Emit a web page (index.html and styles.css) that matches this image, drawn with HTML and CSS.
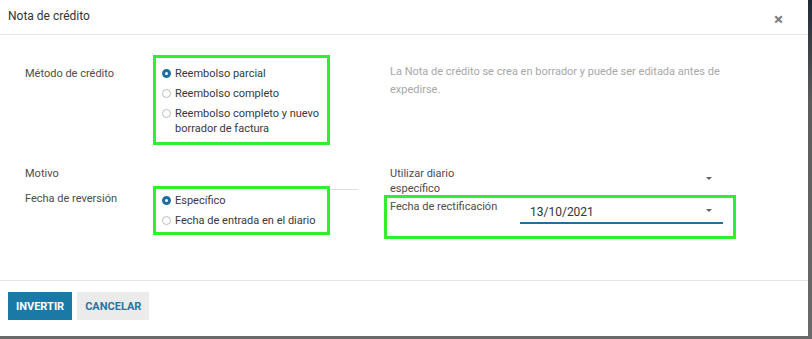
FILE: index.html
```html
<!DOCTYPE html>
<html lang="es">
<head>
  <meta charset="UTF-8" />
  <title>Nota de crédito</title>
  <link rel="stylesheet" href="styles.css">
</head>
<body>
  <div class="modal">
    <header class="modal-header">
      <h4 class="modal-title">Nota de crédito</h4>
      <span class="cerrar">&times;</span>
    </header>

    <div class="modal-body">
      <div class="grupo">
        <div class="fila">
          <label class="etiqueta">Método de crédito</label>
          <div class="radios marcado">
            <div class="opcion"><span class="radio activo"></span>Reembolso parcial</div>
            <div class="opcion"><span class="radio"></span>Reembolso completo</div>
            <div class="opcion"><span class="radio"></span>Reembolso completo y nuevo borrador de factura</div>
          </div>
        </div>
      </div>

      <div class="ayuda">
        La Nota de crédito se crea en borrador y puede ser editada antes de expedirse.
      </div>

      <div class="grupo">
        <div class="fila">
          <label class="etiqueta sin-margen">Motivo</label>
          <div class="campo-texto"></div>
        </div>
        <div class="fila fila-solapada">
          <label class="etiqueta">Fecha de reversión</label>
          <div class="radios marcado radios-cortos">
            <div class="opcion"><span class="radio activo"></span>Específico</div>
            <div class="opcion"><span class="radio"></span>Fecha de entrada en el diario</div>
          </div>
        </div>
      </div>

      <div class="grupo derecha">
        <div class="fila">
          <label class="etiqueta corta">Utilizar diario específico</label>
          <div class="selector"><span class="flecha"></span></div>
        </div>
        <div class="fila marcado fila-fecha">
          <label class="etiqueta corta">Fecha de rectificación</label>
          <div class="selector fecha">13/10/2021<span class="flecha"></span></div>
        </div>
      </div>
    </div>

    <footer class="modal-footer">
      <button class="btn primario">Invertir</button>
      <button class="btn secundario">Cancelar</button>
    </footer>
  </div>
</body>
</html>
```

FILE: styles.css
```css
/* Diálogo de nota de crédito */

html, body {
  margin: 0;
  height: 100%;
}

body {
  font-family: Roboto, "Liberation Sans", Arial, sans-serif;
  font-size: 11px;
  color: #4c4c4c;
  background: linear-gradient(#1f2a36, #5c5c5c 30%, #6a6a6a);
}

.modal {
  width: 808px;
  height: 336px;
  background: #fff;
  display: flex;
  flex-direction: column;
}

.modal-header {
  height: 35px;
  box-sizing: border-box;
  border-bottom: 1px solid #e6e6e6;
  display: flex;
  align-items: center;
  justify-content: space-between;
  padding: 0 25px 0 8px;
}

.modal-title {
  margin: 0 0 3px;
  font-size: 12px;
  font-weight: normal;
  color: #333;
}

.cerrar {
  font-size: 17px;
  font-weight: bold;
  color: #7d7d7d;
  margin-top: 3px;
}

.modal-body {
  height: 245px;
  box-sizing: border-box;
  padding: 20px 0 0 25px;
  display: grid;
  grid-template-columns: 333px 352px;
  column-gap: 26px;
  row-gap: 21px;
  align-content: start;
}

.fila {
  display: flex;
  align-items: flex-start;
}

.etiqueta {
  width: 128px;
  flex: none;
  line-height: 15px;
  padding-top: 11px;
}

.etiqueta.sin-margen {
  padding-top: 0;
}

.marcado {
  border: 3px solid #2ef02e;
  background: #fff;
}

.radios {
  width: 165px;
  padding: 8px 0 6px 6px;
  color: #383838;
}

.opcion {
  display: flex;
  line-height: 15px;
  margin-bottom: 5px;
}

.opcion:last-child {
  margin-bottom: 0;
}

.radio {
  flex: none;
  width: 9px;
  height: 9px;
  box-sizing: border-box;
  border: 1px solid #bdbdbd;
  border-radius: 50%;
  margin: 3px 4px 0 0;
}

.radio.activo {
  border: 3px solid #1d6fa3;
  background: #fff;
}

.ayuda {
  color: #a8a8a8;
  line-height: 18px;
  padding: 8px 0 0 6px;
}

.campo-texto {
  width: 205px;
  height: 23px;
  border-bottom: 1px solid #dcdcdc;
}

.fila-solapada {
  margin-top: -4px;
}

.fila-solapada .etiqueta {
  padding-top: 5px;
}

.radios-cortos {
  padding: 4px 0 4px 6px;
}

.derecha .etiqueta.corta {
  width: 100px;
  padding: 0 30px 0 6px;
}

.derecha .fila:first-child {
  height: 29px;
}

.selector {
  position: relative;
  width: 203px;
  height: 25px;
}

.flecha {
  position: absolute;
  right: 11px;
  top: 11px;
  border-left: 3px solid transparent;
  border-right: 3px solid transparent;
  border-top: 3px solid #666;
}

.fila-fecha {
  width: 346px;
  height: 38px;
  align-items: flex-start;
}

.derecha .fila-fecha .etiqueta.corta {
  padding: 1px 5px 0 3px;
  width: 125px;
  white-space: nowrap;
}

.selector.fecha {
  height: 25px;
  margin-top: 1px;
  box-sizing: border-box;
  padding: 6px 0 0 10px;
  font-size: 12px;
  color: #333;
  border-bottom: 2px solid #1f6fa0;
}

.selector.fecha .flecha {
  top: 10px;
}

.modal-footer {
  border-top: 1px solid #e6e6e6;
  padding: 11px 8px;
  display: flex;
  gap: 5px;
}

.btn {
  font-family: Roboto, "Liberation Sans", Arial, sans-serif;
  font-size: 11px;
  font-weight: bold;
  text-transform: uppercase;
  height: 28px;
  padding: 0 8px;
  border: none;
  border-radius: 0;
}

.primario {
  background: #1b79a5;
  color: #fff;
}

.secundario {
  background: #ebebeb;
  color: #1f77a3;
}
```
